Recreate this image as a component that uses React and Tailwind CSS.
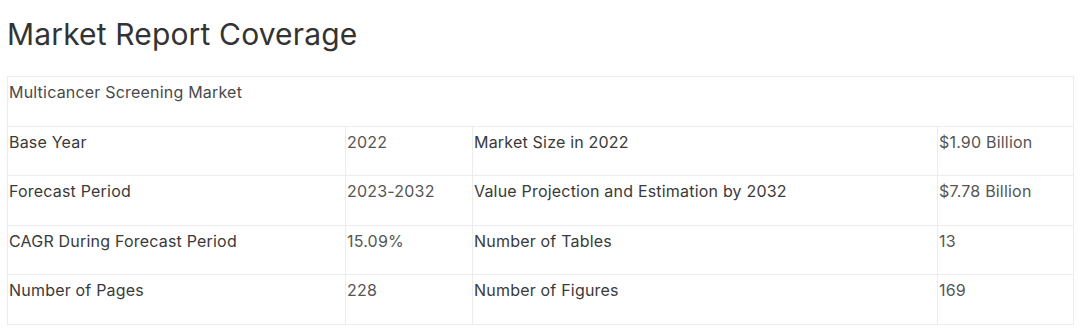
const rows = [
  ['Base Year', '2022', 'Market Size in 2022', '$1.90 Billion'],
  ['Forecast Period', '2023-2032', 'Value Projection and Estimation by 2032', '$7.78 Billion'],
  ['CAGR During Forecast Period', '15.09%', 'Number of Tables', '13'],
  ['Number of Pages', '228', 'Number of Figures', '169'],
];

const cell = 'border border-[#ececec] align-top pl-[1px] pr-[2px] pt-[2px] h-[49.6px]';

export default function App() {
  return (
    <div className="w-[1080px] h-[329px] bg-white font-['Inter',sans-serif] text-[#4a4a4a]">
      <div className="pl-[7px] pr-[7px] pt-[14px]">
        <h1 className="text-[30px] leading-[40px] font-normal text-[#333] tracking-[0.15px]">Market Report Coverage</h1>
        <table className="mt-[22px] w-[1066px] border-collapse table-fixed text-[16px] leading-[26px] tracking-[0.2px]">
          <colgroup>
            <col className="w-[338px]" />
            <col className="w-[127px]" />
            <col className="w-[465px]" />
            <col className="w-[136px]" />
          </colgroup>
          <tbody>
            <tr>
              <td colSpan={4} className={cell}>Multicancer Screening Market</td>
            </tr>
            {rows.map((r) => (
              <tr key={r[0]}>
                <td className={`${cell} text-[#3a3a3a]`}>{r[0]}</td>
                <td className={`${cell} text-[#555]`}>{r[1]}</td>
                <td className={`${cell} text-[#3a3a3a]`}>{r[2]}</td>
                <td className={`${cell} text-[#555]`}>{r[3]}</td>
              </tr>
            ))}
          </tbody>
        </table>
      </div>
    </div>
  );
}
